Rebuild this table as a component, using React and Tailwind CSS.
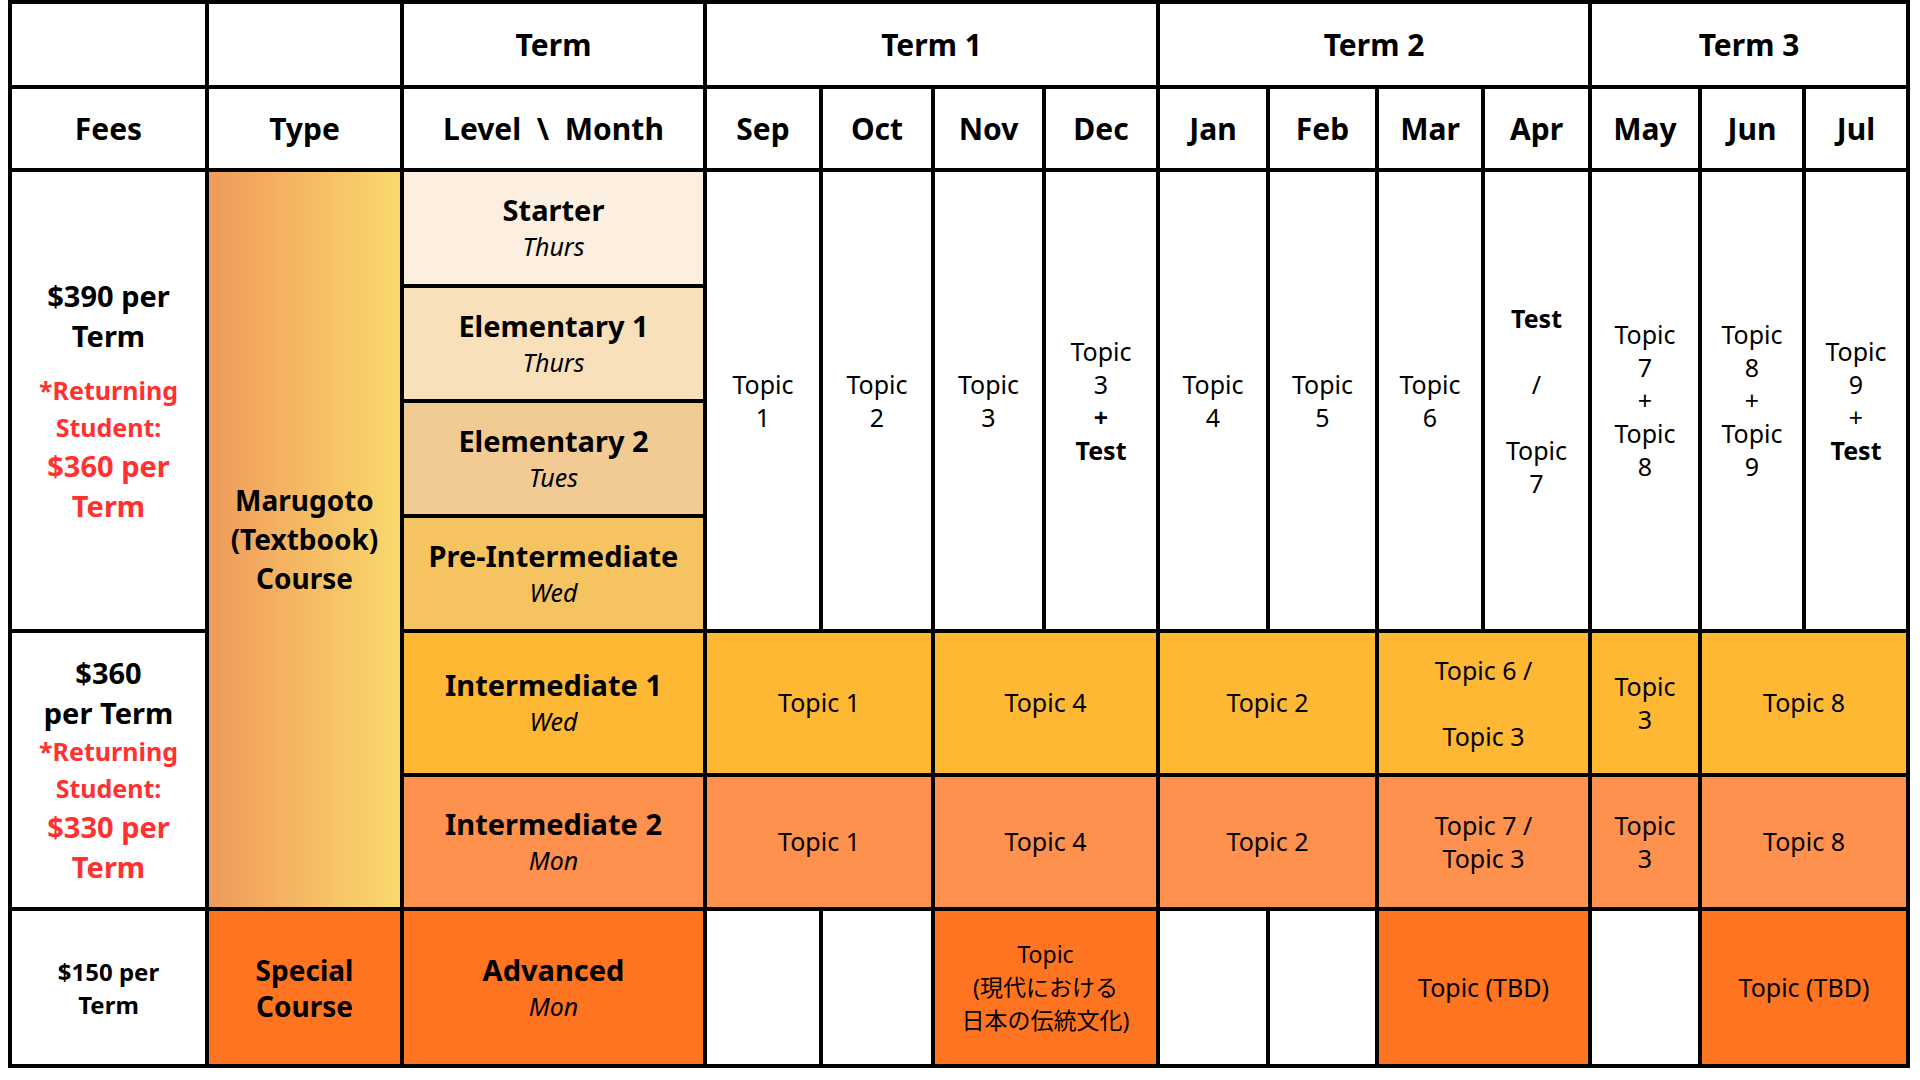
const months = ['Sep', 'Oct', 'Nov', 'Dec', 'Jan', 'Feb', 'Mar', 'Apr', 'May', 'Jun', 'Jul'];

function Cell({ className = '', children }) {
  return (
    <div className={`flex flex-col items-center justify-center text-center ${className}`}>
      {children}
    </div>
  );
}

function Level({ name, day, className }) {
  return (
    <Cell className={className}>
      <div className="text-[29px] font-bold leading-[36px]">{name}</div>
      <div className="text-[25px] italic leading-[36px]">{day}</div>
    </Cell>
  );
}

function Lines({ lines }) {
  return (
    <div className="text-[25px] leading-[33px]">
      {lines.map((l, i) => (
        <div key={i} className={l.bold ? 'font-bold' : ''}>
          {l.text === '' ? '\u00a0' : l.text}
        </div>
      ))}
    </div>
  );
}

const t = (text, bold = false) => ({ text, bold });

const termColumns = [
  [t('Topic'), t('1')],
  [t('Topic'), t('2')],
  [t('Topic'), t('3')],
  [t('Topic'), t('3'), t('+', true), t('Test', true)],
  [t('Topic'), t('4')],
  [t('Topic'), t('5')],
  [t('Topic'), t('6')],
  [t('Test', true), t(''), t('/'), t(''), t('Topic'), t('7')],
  [t('Topic'), t('7'), t('+'), t('Topic'), t('8')],
  [t('Topic'), t('8'), t('+'), t('Topic'), t('9')],
  [t('Topic'), t('9'), t('+'), t('Test', true)],
];

export default function App() {
  return (
    <div className="bg-white pl-[8px] font-['Noto_Sans',sans-serif] text-black">
      <div className="grid w-[1902px] gap-[4px] bg-black p-[4px] grid-cols-[193px_191px_299px_112px_108px_107px_110px_106px_105px_102px_103px_106px_100px_100px] grid-rows-[81px_79px_112px_111px_111px_111px_140px_130px_153px]">
        {/* header row 1 */}
        <Cell className="bg-white" />
        <Cell className="bg-white" />
        <Cell className="bg-white text-[30px] font-bold">Term</Cell>
        <Cell className="col-span-4 bg-white text-[30px] font-bold">Term 1</Cell>
        <Cell className="col-span-4 bg-white text-[30px] font-bold">Term 2</Cell>
        <Cell className="col-span-3 bg-white text-[30px] font-bold">Term 3</Cell>

        {/* header row 2 */}
        <Cell className="bg-white text-[30px] font-bold">Fees</Cell>
        <Cell className="bg-white text-[30px] font-bold">Type</Cell>
        <Cell className="bg-white text-[30px] font-bold whitespace-pre">{'Level  \\  Month'}</Cell>
        {months.map((m) => (
          <Cell key={m} className="bg-white text-[30px] font-bold">{m}</Cell>
        ))}

        {/* body: beginner levels */}
        <Cell className="row-span-4 bg-white">
          <div className="text-[29px] font-bold leading-[40px]">
            $390 per<br />Term
          </div>
          <div className="mt-[16px] text-[#ff3131] font-bold">
            <div className="text-[25px] leading-[37px]">*Returning<br />Student:</div>
            <div className="text-[29px] leading-[40px]">$360 per<br />Term</div>
          </div>
        </Cell>
        <Cell className="row-span-6 bg-linear-to-r from-[#ef9a5b] to-[#f9d96d] text-[28px] font-bold leading-[39px]">
          <div>Marugoto<br />(Textbook)<br />Course</div>
        </Cell>
        <Level name="Starter" day="Thurs" className="bg-[#fcefdf]" />
        {termColumns.map((lines, i) => (
          <Cell key={i} className="row-span-4 bg-white">
            <Lines lines={lines} />
          </Cell>
        ))}
        <Level name="Elementary 1" day="Thurs" className="bg-[#f8e0bb]" />
        <Level name="Elementary 2" day="Tues" className="bg-[#f1cb93]" />
        <Level name="Pre-Intermediate" day="Wed" className="bg-[#f5c460]" />

        {/* intermediate 1 */}
        <Cell className="row-span-2 bg-white font-bold">
          <div className="text-[29px] leading-[40px]">$360<br />per Term</div>
          <div className="text-[#ff3131]">
            <div className="text-[25px] leading-[37px]">*Returning<br />Student:</div>
            <div className="text-[29px] leading-[40px]">$330 per<br />Term</div>
          </div>
        </Cell>
        <Level name="Intermediate 1" day="Wed" className="bg-[#feb833]" />
        <Cell className="col-span-2 bg-[#feb833] text-[25px]">Topic 1</Cell>
        <Cell className="col-span-2 bg-[#feb833] text-[25px]">Topic 4</Cell>
        <Cell className="col-span-2 bg-[#feb833] text-[25px]">Topic 2</Cell>
        <Cell className="col-span-2 bg-[#feb833]">
          <Lines lines={[t('Topic 6 /'), t(''), t('Topic 3')]} />
        </Cell>
        <Cell className="bg-[#feb833]">
          <Lines lines={[t('Topic'), t('3')]} />
        </Cell>
        <Cell className="col-span-2 bg-[#feb833] text-[25px]">Topic 8</Cell>

        {/* intermediate 2 */}
        <Level name="Intermediate 2" day="Mon" className="bg-[#fe914d]" />
        <Cell className="col-span-2 bg-[#fe914d] text-[25px]">Topic 1</Cell>
        <Cell className="col-span-2 bg-[#fe914d] text-[25px]">Topic 4</Cell>
        <Cell className="col-span-2 bg-[#fe914d] text-[25px]">Topic 2</Cell>
        <Cell className="col-span-2 bg-[#fe914d]">
          <Lines lines={[t('Topic 7 /'), t('Topic 3')]} />
        </Cell>
        <Cell className="bg-[#fe914d]">
          <Lines lines={[t('Topic'), t('3')]} />
        </Cell>
        <Cell className="col-span-2 bg-[#fe914d] text-[25px]">Topic 8</Cell>

        {/* advanced */}
        <Cell className="bg-white text-[24px] font-bold leading-[33px]">
          <div>$150 per<br />Term</div>
        </Cell>
        <Cell className="bg-[#fe7420] text-[28px] font-bold leading-[36px]">
          <div>Special<br />Course</div>
        </Cell>
        <Level name="Advanced" day="Mon" className="bg-[#fe7420]" />
        <Cell className="bg-white" />
        <Cell className="bg-white" />
        <Cell className="col-span-2 bg-[#fe7420] font-['Noto_Sans','Noto_Sans_CJK_JP',sans-serif] text-[23px] leading-[33px]">
          <div>Topic</div>
          <div>(現代における</div>
          <div>日本の伝統文化)</div>
        </Cell>
        <Cell className="bg-white" />
        <Cell className="bg-white" />
        <Cell className="col-span-2 bg-[#fe7420] text-[25px]">Topic (TBD)</Cell>
        <Cell className="bg-white" />
        <Cell className="col-span-2 bg-[#fe7420] text-[25px]">Topic (TBD)</Cell>
      </div>
    </div>
  );
}
